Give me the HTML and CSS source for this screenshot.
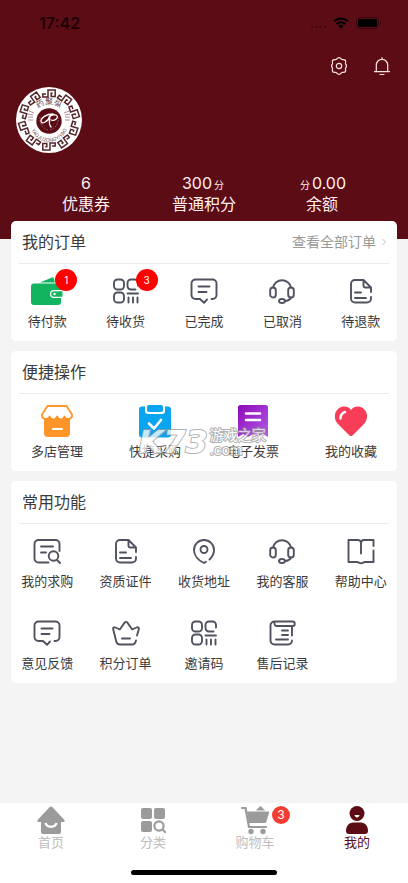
FILE: index.html
```html
<!DOCTYPE html>
<html lang="zh-CN">
<head>
    <meta charset="UTF-8">
    <meta name="viewport" content="width=device-width, initial-scale=1.0">
    <title>我的</title>
    <link rel="stylesheet" href="styles.css">
</head>
<body>

<!-- 图标 -->
<svg class="sprite" aria-hidden="true">
    <symbol id="i-message" viewBox="0 0 28 28">
        <path d="M21.500 22h1a4 4 0 0 0 4-4V6.500a4 4 0 0 0-4-4H5.500a4 4 0 0 0-4 4V18a4 4 0 0 0 4 4H10l4 3.800 3-3.300M8.500 9.500h11M8.500 15h8"/>
    </symbol>
    <symbol id="i-qr" viewBox="0 0 28 28">
        <rect x="2" y="2.500" width="10" height="10" rx="3.500"/>
        <rect x="2" y="15.500" width="10" height="10" rx="3.500"/>
        <path d="M26 8.500V6a3.500 3.500 0 0 0-3.500-3.500H19A3.500 3.500 0 0 0 15.500 6v3a3.500 3.500 0 0 0 3.500 3.500h4.500M15.500 16.500h10.500M16.500 20.500v5M21 20.500v5M25.500 20.500v5"/>
    </symbol>
    <symbol id="i-headset" viewBox="0 0 28 28">
        <path d="M5 10.500a9.200 9.200 0 0 1 18 0M23 20.500c-1 2.200-3 3.300-6 3.500"/>
        <rect x="2.200" y="10.500" width="5.600" height="10" rx="2.800"/>
        <rect x="20.200" y="10.500" width="5.600" height="10" rx="2.800"/>
        <ellipse cx="14" cy="24" rx="3" ry="2"/>
    </symbol>
    <symbol id="i-doc" viewBox="0 0 28 28">
        <path d="M24 15v-4.500L16.500 3H8a4 4 0 0 0-4 4v14.500a4 4 0 0 0 4 4h12a4 4 0 0 0 4-4v-1.500M16.500 3v5.500a2 2 0 0 0 2 2H24M8 15.500h6M8 21h11"/>
    </symbol>
    <symbol id="i-search" viewBox="0 0 28 28">
        <path d="M15.500 25.500h-10a4 4 0 0 1-4-4V7a4 4 0 0 1 4-4h17a4 4 0 0 1 4 4v7M8 9.500h12M8 15.500h5M24 23l3 3"/>
        <circle cx="20.500" cy="19" r="4.800"/>
    </symbol>
    <symbol id="i-pin" viewBox="0 0 28 28">
        <path d="M19.500 22.500c2.800-2.700 4.500-6 4.500-9.500a10 10 0 0 0-20 0c0 5.500 4.500 10.500 10 13l2-1.200"/>
        <circle cx="14" cy="12.500" r="3.500"/>
    </symbol>
    <symbol id="i-book" viewBox="0 0 28 28">
        <path d="M26.500 9V3H17a3 3 0 0 0-3 3 3 3 0 0 0-3-3H1.500v22H10c1.800 0 2 1.300 4 1.300s2.200-1.300 4-1.300h8.500V13.500M14 6v10.500"/>
    </symbol>
    <symbol id="i-crown" viewBox="0 0 28 28">
        <path d="M25 16.500l1.800-6.300c.4-1.500-1-2.500-2.300-1.700L20.200 10.500 15.400 3.600c-.8-1-2-1-2.800 0L7.800 10.500 3.500 8.500C2.200 7.700.8 8.700 1.200 10.200l3 12c.5 2 1.800 3.300 3.800 3.300h12c2.200 0 3.500-1.500 4-4M10 19.500h8"/>
    </symbol>
    <symbol id="i-record" viewBox="0 0 28 28">
        <path d="M6.500 2.500h18a2.200 2.200 0 0 1 0 4.500H9a2.200 2.200 0 0 1-2.500-2.200V2.500a4 4 0 0 0-4 4v15a4 4 0 0 0 4 4h13.500a4 4 0 0 0 4-4M24 7v9.500M14 11.500h6M14 16h6M8 20.500h12"/>
    </symbol>
</svg>

<div class="page">
    <header class="header">
        <div class="status-bar">
            <span class="time">17:42</span>
            <span class="dots">····</span>
            <svg class="wifi" viewBox="0 0 16 12">
                <path d="M1 4.300a10.200 10.200 0 0 1 14 0M3.500 7a6.600 6.600 0 0 1 9 0"/>
                <path class="tip" d="M8 11.800L5.300 9.100a3.900 3.900 0 0 1 5.400 0z"/>
            </svg>
            <svg class="battery" viewBox="0 0 26 12">
                <rect class="case" x=".5" y=".5" width="22" height="11" rx="3"/>
                <rect x="2" y="2" width="19" height="8" rx="1.500"/>
                <path class="cap" d="M24 4v4c1.500-.6 1.500-3.400 0-4z"/>
            </svg>
        </div>

        <div class="actions">
            <button type="button" aria-label="设置">
                <svg viewBox="0 0 20 20">
                    <path d="M7.600 3.200Q10 .2 12.400 3.200q.5.600 1.300.500 3.700-.5 2.800 3.200-.2.700.2 1.300 1.600 1.800 0 3.600-.4.600-.2 1.300.9 3.700-2.800 3.200-.8-.1-1.300.5Q10 19.800 7.600 16.800q-.5-.6-1.300-.5-3.700.5-2.800-3.200.2-.7-.2-1.300-1.600-1.800 0-3.600.4-.6.200-1.300-.9-3.700 2.800-3.200.8.100 1.300-.5z"/>
                    <circle cx="10" cy="10" r="2.700"/>
                </svg>
            </button>
            <button type="button" aria-label="消息">
                <svg viewBox="0 0 20 20">
                    <path d="M10 1.500v1.700M4.300 15.500V9a5.700 5.700 0 0 1 11.400 0v6.500M2.500 15.600h15M8 18.500h4"/>
                </svg>
            </button>
        </div>

        <svg class="avatar" viewBox="0 0 66 66" role="img" aria-label="头像">
            <defs>
                <path id="arcTop" d="M17 33a16 16 0 0 1 32 0"/>
                <path id="arcBottom" d="M14 36a19 19 0 0 0 38 0"/>
                <path id="meander" d="M-3-26h-3.200v3h5.200v-7h7.200v6.500h-4v-3.200h1.500"/>
            </defs>
            <circle class="paper" cx="33" cy="33" r="33"/>
            <g class="keys" transform="translate(33 33)">
                <use href="#meander"/>
                <use href="#meander" transform="rotate(36)"/>
                <use href="#meander" transform="rotate(72)"/>
                <use href="#meander" transform="rotate(108)"/>
                <use href="#meander" transform="rotate(144)"/>
                <use href="#meander" transform="rotate(180)"/>
                <use href="#meander" transform="rotate(216)"/>
                <use href="#meander" transform="rotate(252)"/>
                <use href="#meander" transform="rotate(288)"/>
                <use href="#meander" transform="rotate(324)"/>
            </g>
            <path class="ticks" d="M13 24l5 2M12 27l5 1M12 30h5M12 33h5M53 24l-5 2M54 27l-5 1M54 30h-5M54 33h-5"/>
            <text class="seal-name"><textPath href="#arcTop" startOffset="50%">药聚纵</textPath></text>
            <text class="seal-latin"><textPath href="#arcBottom" startOffset="50%">YAOJUZONGYIYAO</textPath></text>
            <circle class="core" cx="33" cy="34" r="12.700"/>
            <path class="wreath" d="M24 30c-1 6 2 11 8 13M42 30c1 6-2 11-8 13"/>
            <path class="mark" d="M37 27c-7 0-12 4-12 7 0 4 7 1 9-5-1 5-1 9 1 11M33 30c4-4 10-2 8 1-1 2-4 3-6 2"/>
        </svg>

        <div class="stats">
            <a href="#" class="stat"><span class="num">6</span><span>优惠券</span></a>
            <a href="#" class="stat"><span class="num">300<small>分</small></span><span>普通积分</span></a>
            <a href="#" class="stat"><span class="num"><small>分</small>0.00</span><span>余额</span></a>
        </div>
    </header>

    <main class="content">
        <section class="card">
            <div class="card-head">
                <h2>我的订单</h2>
                <a href="#" class="more">查看全部订单
                    <svg viewBox="0 0 4 8"><path d="M.5 1l3 3-3 3"/></svg>
                </a>
            </div>
            <div class="grid five">
                <a href="#" class="item">
                    <span class="icon">
                        <svg class="color" viewBox="0 0 32 28">
                            <path fill="#12b45f" d="M9 5.500L21 .500c1-.4 1.500 0 1.700.7L24 5.500z"/>
                            <path fill="#12b45f" d="M3 6.500h24a3 3 0 0 1 3 3V13h-7a4 4 0 0 0 0 8h7v4a3 3 0 0 1-3 3H3a3 3 0 0 1-3-3V9.500a3 3 0 0 1 3-3z"/>
                            <path fill="#12b45f" d="M23 14.200h8.500v5.600H23a2.800 2.800 0 0 1 0-5.600z"/>
                            <circle cx="23.500" cy="17" r="1.300" fill="#fff"/>
                        </svg>
                        <span class="badge">1</span>
                    </span>
                    待付款
                </a>
                <a href="#" class="item">
                    <span class="icon"><svg><use href="#i-qr"/></svg><span class="badge">3</span></span>
                    待收货
                </a>
                <a href="#" class="item"><span class="icon"><svg><use href="#i-message"/></svg></span>已完成</a>
                <a href="#" class="item"><span class="icon"><svg><use href="#i-headset"/></svg></span>已取消</a>
                <a href="#" class="item"><span class="icon"><svg><use href="#i-doc"/></svg></span>待退款</a>
            </div>
        </section>

        <section class="card">
            <div class="card-head"><h2>便捷操作</h2></div>
            <div class="grid four">
                <a href="#" class="item">
                    <span class="icon">
                        <svg class="color" viewBox="0 0 32 32">
                            <path fill="#ff9429" d="M3 13h26v15a4 4 0 0 1-4 4H7a4 4 0 0 1-4-4z"/>
                            <path fill="#fff" stroke="#ff9429" stroke-width="1.800" stroke-linejoin="round" d="M6.500 1h19L31 9.500c.5 5-6 6-7.500 2-1.500 4-6 4-7.500 0-1.500 4-6 4-7.500 0C7 15.500.5 14.500 1 9.500z"/>
                            <path stroke="#fff" stroke-width="2.200" stroke-linecap="round" d="M12 24h9"/>
                        </svg>
                    </span>
                    多店管理
                </a>
                <a href="#" class="item">
                    <span class="icon">
                        <svg class="color" viewBox="0 0 32 32">
                            <rect y="1.500" width="32" height="31" rx="3" fill="#0aa5f0"/>
                            <rect x="6" y="-2" width="20" height="11" rx="3" fill="#fff"/>
                            <rect x="8" y="0" width="16" height="7" rx="2" fill="#0aa5f0"/>
                            <path fill="none" stroke="#fff" stroke-width="2.600" stroke-linecap="round" stroke-linejoin="round" d="M10 18.500l5 5L22 15"/>
                        </svg>
                    </span>
                    快捷采购
                </a>
                <a href="#" class="item">
                    <span class="icon">
                        <svg class="color" viewBox="0 0 32 32">
                            <defs>
                                <linearGradient id="violet" x2="1" y2="1">
                                    <stop stop-color="#8d08b8"/>
                                    <stop offset="1" stop-color="#b45ce8"/>
                                </linearGradient>
                            </defs>
                            <path fill="url(#violet)" d="M3.500 0h25A2.500 2.500 0 0 1 31 2.500V32l-5-3-5 3-5-3-5 3-5-3-5 3V2.500A2.500 2.500 0 0 1 3.500 0z"/>
                            <path stroke="#fff" stroke-width="2.600" stroke-linecap="round" d="M9 8.500h14M9 15h14"/>
                        </svg>
                    </span>
                    电子发票
                </a>
                <a href="#" class="item">
                    <span class="icon">
                        <svg class="color" viewBox="0 0 32 32">
                            <path fill="#f83d58" d="M14.500 30.500L3 19C-4 11 2 1.500 9 1.500c3.500 0 5.500 1.500 7 3.500 1.500-2 3.500-3.500 7-3.500 7 0 13 9.500 6 17.500L17.500 30.500q-1.500 1.200-3 0z"/>
                            <path fill="none" stroke="#fff" stroke-width="2.400" stroke-linecap="round" d="M5.500 13.500c0-3.500 1.500-5.500 4.500-6.500"/>
                        </svg>
                    </span>
                    我的收藏
                </a>
            </div>
            <div class="watermark" aria-hidden="true">
                <span class="wm-logo">K73</span>
                <span class="wm-text">游戏之家<br>.com</span>
            </div>
        </section>

        <section class="card">
            <div class="card-head"><h2>常用功能</h2></div>
            <div class="grid five">
                <a href="#" class="item"><span class="icon"><svg><use href="#i-search"/></svg></span>我的求购</a>
                <a href="#" class="item"><span class="icon"><svg><use href="#i-doc"/></svg></span>资质证件</a>
                <a href="#" class="item"><span class="icon"><svg><use href="#i-pin"/></svg></span>收货地址</a>
                <a href="#" class="item"><span class="icon"><svg><use href="#i-headset"/></svg></span>我的客服</a>
                <a href="#" class="item"><span class="icon"><svg><use href="#i-book"/></svg></span>帮助中心</a>
                <a href="#" class="item"><span class="icon"><svg><use href="#i-message"/></svg></span>意见反馈</a>
                <a href="#" class="item"><span class="icon"><svg><use href="#i-crown"/></svg></span>积分订单</a>
                <a href="#" class="item"><span class="icon"><svg><use href="#i-qr"/></svg></span>邀请码</a>
                <a href="#" class="item"><span class="icon"><svg><use href="#i-record"/></svg></span>售后记录</a>
            </div>
        </section>
    </main>

    <footer class="footer">
        <nav class="tabs">
            <a href="#" class="tab">
                <svg viewBox="0 0 28 28">
                    <path d="M12.500 1.200q1.500-1.400 3 0L27.500 14q1 1.700-1 2H24v10a2 2 0 0 1-2 2H6a2 2 0 0 1-2-2V16H1.500q-2-.3-1-2z"/>
                    <path class="cut" d="M8.500 17c1.500 5 9.500 5 11 0"/>
                </svg>
                首页
            </a>
            <a href="#" class="tab">
                <svg viewBox="0 0 28 28">
                    <rect x="2" y="2" width="11" height="11" rx="2"/>
                    <rect x="15" y="2" width="11" height="11" rx="2"/>
                    <rect x="2" y="15" width="11" height="11" rx="2"/>
                    <path class="line" d="M24 24l2 2"/>
                    <circle class="line" cx="20" cy="20" r="4.600"/>
                </svg>
                分类
            </a>
            <a href="#" class="tab">
                <svg viewBox="0 0 28 28">
                    <path d="M15 4.500l3.500-3.800q1-1 2 0L24 4.500zM6 5.500h21q1.500 0 1 1.500l-2.700 9q-.3 1-1.300 1H8z"/>
                    <path class="line" d="M1 2h3.500L8 21h17"/>
                    <circle cx="10" cy="25.500" r="2.700"/>
                    <circle cx="22" cy="25.500" r="2.700"/>
                </svg>
                <span class="badge">3</span>
                购物车
            </a>
            <a href="#" class="tab active">
                <svg viewBox="0 0 28 28">
                    <circle cx="14" cy="7.500" r="7.500"/>
                    <path d="M10 16.500h8c4 0 7 3.500 7 8.500 0 2-1 3-3 3H6c-2 0-3-1-3-3 0-5 3-8.500 7-8.500z"/>
                    <path class="smile" d="M11.500 9h5c-.3 3.300-4.700 3.300-5 0z"/>
                </svg>
                我的
            </a>
        </nav>
        <div class="home-bar"></div>
    </footer>
</div>

</body>
</html>
```

FILE: styles.css
```css
* {
    box-sizing: border-box;
}

body {
    margin: 0;
    background-color: #f4f4f4;
    color: #3a3a3a;
    font-family: Inter, "Noto Sans CJK SC", sans-serif;
    font-size: 13px;
    line-height: 20px;
}

a {
    color: inherit;
    text-decoration: none;
}

svg {
    display: block;
    overflow: visible;
}

.sprite {
    position: absolute;
    width: 0;
    height: 0;
}

.page {
    display: flex;
    flex-direction: column;
    min-height: 100vh;
}

/* 顶部 */
.header {
    padding: 11px 16px 24px;
    background-color: #5c0c14;
    color: #ffeef0;
}

.status-bar {
    display: flex;
    align-items: center;
    height: 24px;
    padding: 0 10px 0 23px;
    color: #1c0205;
}

.time {
    margin-right: auto;
    font-size: 16px;
    font-weight: 600;
}

.dots {
    margin-right: 6px;
    padding-top: 6px;
    color: #3c070d;
    font-weight: 700;
}

.wifi {
    width: 16px;
    height: 12px;
    margin-right: 7px;
    fill: none;
    stroke: #000;
    stroke-width: 2;
}

.wifi .tip {
    fill: #000;
    stroke: none;
}

.battery {
    width: 26px;
    height: 12px;
}

.battery .case {
    fill: none;
    stroke: #3a070c;
}

.battery .cap {
    fill: #3a070c;
}

.actions {
    display: flex;
    justify-content: flex-end;
    gap: 23px;
    margin-top: 21px;
}

.actions button {
    padding: 0;
    border: 0;
    background: none;
    cursor: pointer;
}

.actions svg {
    width: 20px;
    height: 20px;
    fill: none;
    stroke: #ffe3e6;
    stroke-width: 1.2;
    stroke-linecap: round;
}

.avatar {
    width: 66px;
    height: 66px;
    margin-top: 11px;
}

.avatar .paper {
    fill: #fff;
}

.avatar .keys {
    fill: none;
    stroke: #54262b;
    stroke-width: 1.5;
}

.avatar .ticks {
    stroke: #b19297;
    stroke-width: 1;
}

.avatar .seal-name {
    fill: #6d4448;
    font-size: 8px;
    text-anchor: middle;
}

.avatar .seal-latin {
    fill: #7a5559;
    font-size: 5px;
    text-anchor: middle;
}

.avatar .core {
    fill: #5c0c14;
}

.avatar .wreath {
    fill: none;
    stroke: #8d5258;
    stroke-dasharray: 2 1;
}

.avatar .mark {
    fill: none;
    stroke: #fff;
    stroke-width: 1.3;
    stroke-linecap: round;
}

.stats {
    display: flex;
    justify-content: space-evenly;
    margin: 20px -16px 0;
}

.stat {
    display: flex;
    flex-direction: column;
    align-items: center;
    font-size: 16px;
    line-height: 21px;
}

.num {
    height: 21px;
}

.stat small {
    margin: 0 2px;
    font-size: 10px;
    line-height: 10px;
}

/* 卡片 */
.content {
    display: flex;
    flex-direction: column;
    gap: 10px;
    margin-top: -18px;
    padding: 0 11px 20px;
}

.card {
    position: relative;
    padding-bottom: 10px;
    border-radius: 5px;
    background-color: #fff;
}

.card-head {
    display: flex;
    justify-content: space-between;
    align-items: center;
    height: 43px;
    margin: 0 8px;
    padding: 0 3px;
    border-bottom: 1px solid #ebebeb;
}

.card-head h2 {
    margin: 0;
    font-size: 16px;
    font-weight: 400;
}

.more {
    display: flex;
    align-items: center;
    gap: 6px;
    color: #999;
    font-size: 14px;
}

.more svg {
    width: 4px;
    height: 8px;
    fill: none;
    stroke: #c4c4c4;
}

.grid {
    display: grid;
    row-gap: 15px;
    margin: 0 -3px;
}

.five {
    grid-template-columns: repeat(5, 1fr);
}

.four {
    grid-template-columns: repeat(4, 1fr);
}

.item {
    display: flex;
    flex-direction: column;
    align-items: center;
    gap: 6px;
    padding-top: 13px;
    line-height: 20px;
}

.icon {
    position: relative;
    display: flex;
    justify-content: center;
    align-items: center;
    height: 28px;
}

.icon svg {
    width: 28px;
    height: 28px;
    fill: none;
    stroke: #50535f;
    stroke-width: 1.9;
    stroke-linecap: round;
    stroke-linejoin: round;
}

.icon .color {
    width: 32px;
    height: 28px;
    stroke: none;
}

.four .icon .color {
    height: 32px;
}

.badge {
    position: absolute;
    top: -8px;
    left: 24px;
    width: 22px;
    height: 22px;
    border-radius: 50%;
    background-color: #f00;
    color: #fff;
    font-size: 10px;
    line-height: 22px;
    text-align: center;
}

/* 水印 */
.watermark {
    position: absolute;
    top: 75px;
    left: 33%;
    display: flex;
    align-items: center;
    gap: 2px;
    opacity: 0.75;
    color: #fff;
    -webkit-text-stroke: 2px #999;
    paint-order: stroke;
    pointer-events: none;
}

.wm-logo {
    font-family: "DejaVu Sans", sans-serif;
    font-size: 32px;
    font-style: italic;
    font-weight: 700;
    line-height: 32px;
}

.wm-text {
    font-size: 14px;
    line-height: 15px;
}

/* 底部导航 */
.footer {
    margin-top: auto;
    padding-bottom: 8px;
    background-color: #fff;
}

.tabs {
    display: grid;
    grid-template-columns: repeat(4, 1fr);
}

.tab {
    position: relative;
    display: flex;
    flex-direction: column;
    align-items: center;
    padding-top: 3px;
    color: #bebebe;
    line-height: 16px;
}

.tab svg {
    width: 28px;
    height: 28px;
    fill: #9b9b9b;
}

.tab .cut {
    fill: none;
    stroke: #fff;
    stroke-width: 2.5;
}

.tab .line {
    fill: none;
    stroke: #9b9b9b;
    stroke-width: 2.2;
    stroke-linecap: round;
}

.tab .smile {
    fill: #fff;
}

.tab .badge {
    top: 3px;
    left: calc(50% + 17px);
    width: 18px;
    height: 18px;
    background-color: #f43d32;
    font-size: 12px;
    line-height: 18px;
}

.tab.active {
    color: #5c0c14;
}

.tab.active svg {
    fill: #5c0c14;
}

.home-bar {
    width: 36%;
    height: 5px;
    margin: 20px auto 0;
    border-radius: 3px;
    background-color: #000;
}
```
